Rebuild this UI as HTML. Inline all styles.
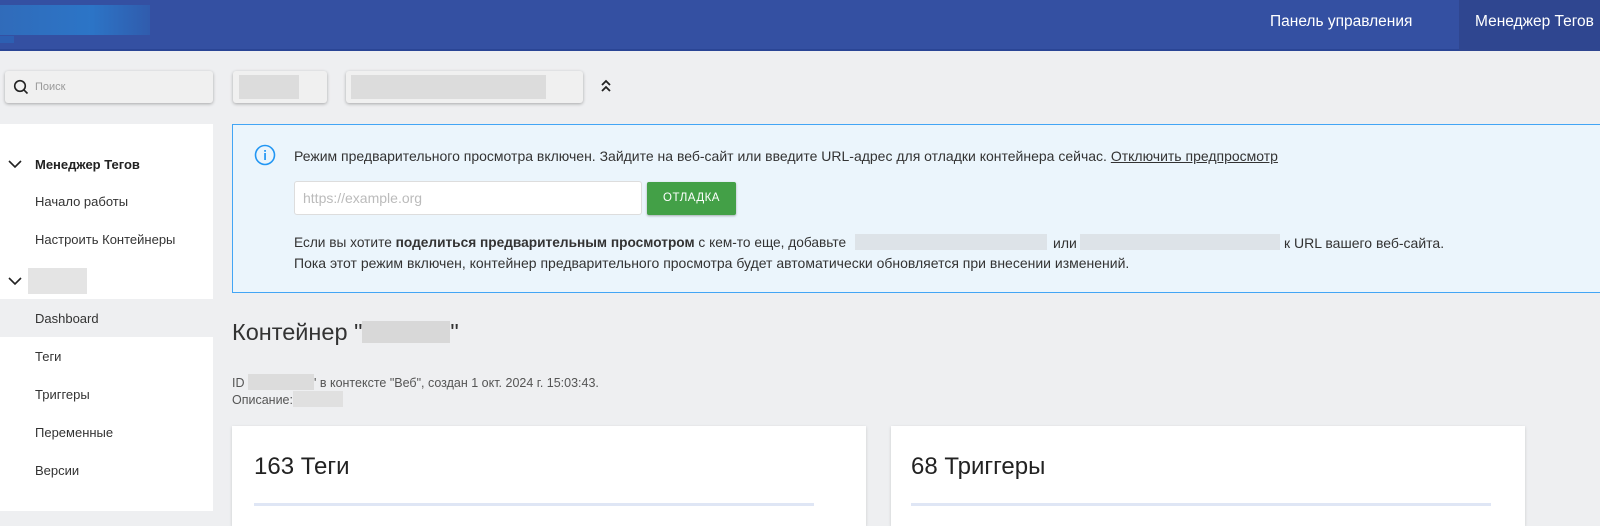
<!DOCTYPE html>
<html><head><meta charset="utf-8"><style>
*{margin:0;padding:0;box-sizing:border-box}
body{width:1600px;height:511px;overflow:hidden;background:#eeeff1;font-family:"Liberation Sans",sans-serif;color:#333;position:relative}
.a{position:absolute}
.blur{position:absolute;background:#dcdcdc}
.ib{display:inline-block;vertical-align:-3px}
</style></head><body>
<div class="a" style="left:0;top:0;width:1600px;height:51px;background:#3450a2;border-bottom:2px solid #2a4595"></div>
<div class="a" style="left:0;top:5px;width:150px;height:30px;background:linear-gradient(90deg,#2f72c0,#2a7ed0 60%,#2f5fb0);opacity:.8"></div>
<div class="a" style="left:0;top:36px;width:14px;height:7px;background:#2d5fb2"></div>
<div class="a" style="left:1459px;top:0;width:141px;height:51px;background:#2f4690"></div>
<div class="a" style="left:1270px;top:13px;color:#fff;font-size:15.5px">Панель управления</div>
<div class="a" style="left:1475px;top:13px;color:#fff;font-size:15.5px;white-space:nowrap">Менеджер Тегов</div>

<div class="a" style="left:5px;top:71px;width:208px;height:32px;background:#f0f0f0;border-radius:3px;box-shadow:0 1px 3px rgba(0,0,0,.3)"></div>
<svg class="a" style="left:13px;top:79px" width="16" height="16" viewBox="0 0 16 16"><circle cx="7" cy="7" r="5.3" fill="none" stroke="#222" stroke-width="1.6"/><path d="M10.8 10.8L14.5 14.5" stroke="#222" stroke-width="1.6"/></svg>
<div class="a" style="left:35px;top:81px;font-size:11px;color:#999">Поиск</div>

<div class="a" style="left:233px;top:71px;width:94px;height:32px;background:#f0f0f0;border-radius:3px;box-shadow:0 1px 3px rgba(0,0,0,.3)"></div>
<div class="blur" style="left:239px;top:75px;width:60px;height:24px"></div>
<div class="a" style="left:346px;top:71px;width:237px;height:32px;background:#f0f0f0;border-radius:3px;box-shadow:0 1px 3px rgba(0,0,0,.3)"></div>
<div class="blur" style="left:351px;top:75px;width:195px;height:24px"></div>
<svg class="a" style="left:600px;top:79px" width="12" height="14"><path d="M2 6l4-4 4 4M2 12l4-4 4 4" fill="none" stroke="#222" stroke-width="1.8"/></svg>

<div class="a" style="left:0;top:124px;width:213px;height:387px;background:#fff"></div>
<div class="a" style="left:0;top:299px;width:213px;height:38px;background:#eeeff1"></div>
<svg class="a" style="left:8px;top:159px" width="14" height="10"><path d="M1 2l6 6 6-6" fill="none" stroke="#222" stroke-width="1.6"/></svg>
<div class="a" style="left:35px;top:157px;font-size:13px;font-weight:bold;color:#222">Менеджер Тегов</div>
<div class="a" style="left:35px;top:194px;font-size:13px">Начало работы</div>
<div class="a" style="left:35px;top:232px;font-size:13px">Настроить Контейнеры</div>
<svg class="a" style="left:8px;top:276px" width="14" height="10"><path d="M1 2l6 6 6-6" fill="none" stroke="#222" stroke-width="1.6"/></svg>
<div class="blur" style="left:28px;top:268px;width:59px;height:26px;background:#e4e4e4"></div>
<div class="a" style="left:35px;top:311px;font-size:13px">Dashboard</div>
<div class="a" style="left:35px;top:349px;font-size:13px">Теги</div>
<div class="a" style="left:35px;top:387px;font-size:13px">Триггеры</div>
<div class="a" style="left:35px;top:425px;font-size:13px">Переменные</div>
<div class="a" style="left:35px;top:463px;font-size:13px">Версии</div>

<div class="a" style="left:232px;top:124px;width:1380px;height:169px;background:#ebf5fc;border:1px solid #42a5f5"></div>
<svg class="a" style="left:254px;top:144px" width="22" height="22"><circle cx="11" cy="11" r="9.5" fill="none" stroke="#2196f3" stroke-width="1.6"/><rect x="10.2" y="6" width="1.7" height="1.8" fill="#2196f3"/><rect x="10.2" y="9" width="1.7" height="7" fill="#2196f3"/></svg>
<div class="a" style="left:294px;top:148px;font-size:14px;white-space:nowrap">Режим предварительного просмотра включен. Зайдите на веб-сайт или введите URL-адрес для отладки контейнера сейчас. <u>Отключить предпросмотр</u></div>
<div class="a" style="left:294px;top:181px;width:348px;height:34px;background:#fff;border:1px solid #ddd;border-radius:3px"></div>
<div class="a" style="left:303px;top:190px;font-size:14px;color:#bbb">https://example.org</div>
<div class="a" style="left:647px;top:182px;width:89px;height:33px;background:#43a047;border-radius:2px;box-shadow:0 1px 2px rgba(0,0,0,.3);color:#fff;font-size:11.5px;text-align:center;line-height:33px;letter-spacing:.5px">ОТЛАДКА</div>
<div class="a" style="left:294px;top:235px;font-size:13.7px;white-space:nowrap">Если вы хотите <b>поделиться предварительным просмотром</b> с кем-то еще, добавьте</div>
<div class="blur" style="left:855px;top:234px;width:192px;height:16px;background:#dde3e8"></div>
<div class="a" style="left:1053px;top:235px;font-size:14px">или</div>
<div class="blur" style="left:1080px;top:234px;width:200px;height:16px;background:#dde3e8"></div>
<div class="a" style="left:1284px;top:235px;font-size:14px;white-space:nowrap">к URL вашего веб-сайта.</div>
<div class="a" style="left:294px;top:255px;font-size:14px;white-space:nowrap">Пока этот режим включен, контейнер предварительного просмотра будет автоматически обновляется при внесении изменений.</div>

<div class="a" style="left:232px;top:319px;font-size:23.5px;color:#333">Контейнер "<span class="ib" style="width:88px;height:22px;background:#d8d8d8"></span>"</div>
<div class="a" style="left:232px;top:374px;font-size:12.5px;color:#555;white-space:nowrap">ID <span class="ib" style="width:66px;height:16px;background:#dcdcdc"></span>' в контексте "Веб", создан 1 окт. 2024 г. 15:03:43.</div>
<div class="a" style="left:232px;top:391px;font-size:12.5px;color:#555">Описание:<span class="ib" style="width:50px;height:16px;background:#e0e0e0"></span></div>

<div class="a" style="left:232px;top:426px;width:634px;height:100px;background:#fff;box-shadow:0 1px 3px rgba(0,0,0,.15)"></div>
<div class="a" style="left:254px;top:453px;font-size:24px;color:#222">163 Теги</div>
<div class="a" style="left:254px;top:503px;width:560px;height:3px;background:#dfe6f5"></div>
<div class="a" style="left:891px;top:426px;width:634px;height:100px;background:#fff;box-shadow:0 1px 3px rgba(0,0,0,.15)"></div>
<div class="a" style="left:911px;top:453px;font-size:24px;color:#222">68 Триггеры</div>
<div class="a" style="left:911px;top:503px;width:580px;height:3px;background:#dfe6f5"></div>
</body></html>
